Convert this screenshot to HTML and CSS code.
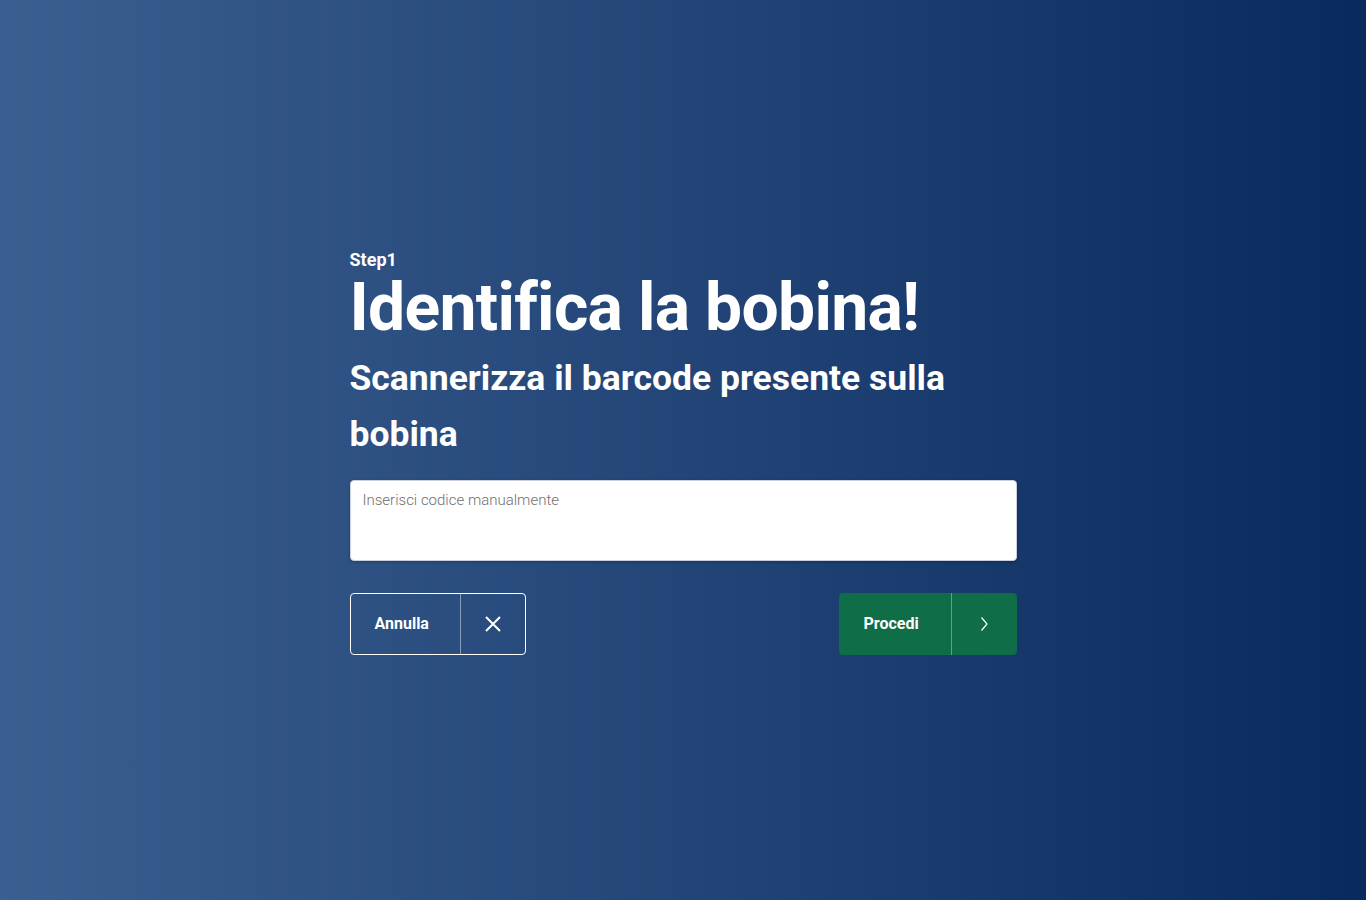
FILE: index.html
```html
<!DOCTYPE html>
<html lang="it">
<head>
<meta charset="utf-8">
<title>Identifica la bobina</title>
<link rel="stylesheet" href="styles.css">
</head>
<body>
<main class="page">
  <section class="panel">
    <div class="step">Step1</div>
    <h1 class="title">Identifica la bobina!</h1>
    <h2 class="subtitle">Scannerizza il barcode presente sulla bobina</h2>
    <textarea class="code-input" placeholder="Inserisci codice manualmente"></textarea>
    <div class="actions">
      <button class="btn btn-cancel" type="button">
        <span class="btn-label">Annulla</span>
        <span class="btn-icon">
          <svg width="18" height="18" viewBox="0 0 18 18" fill="none" stroke="#fff" stroke-width="2"><path d="M2 2 L16 16 M16 2 L2 16"/></svg>
        </span>
      </button>
      <button class="btn btn-go" type="button">
        <span class="btn-label">Procedi</span>
        <span class="btn-icon">
          <svg width="10" height="16" viewBox="0 0 10 16" fill="none" stroke="#fff" stroke-width="1.2"><path d="M2.5 1.5 L8 8 L2.5 14.5"/></svg>
        </span>
      </button>
    </div>
  </section>
</main>
</body>
</html>
```
FILE: styles.css
```css
html, body {
  margin: 0;
  height: 100%;
}
body {
  font-family: Roboto, "Liberation Sans", sans-serif;
  background: linear-gradient(90deg, #3b5f90 0%, #0a2a5d 100%);
  color: #fff;
}
.page {
  min-height: 100vh;
  display: flex;
  align-items: center;
  justify-content: center;
}
.panel {
  width: 667px;
  display: flex;
  flex-direction: column;
  margin-top: 4px;
}
.step {
  font-size: 18px;
  font-weight: 700;
  line-height: 19px;
}
.title {
  margin: 0 0 3px;
  font-size: 66px;
  font-weight: 700;
  line-height: 78px;
  letter-spacing: -0.7px;
}
.subtitle {
  margin: 0;
  font-size: 35.5px;
  font-weight: 700;
  line-height: 56px;
  width: 640px;
}
.code-input {
  margin-top: 18px;
  box-sizing: border-box;
  width: 667px;
  height: 81px;
  border: 1px solid #c9d0d9;
  border-radius: 4px;
  padding: 10px 12px;
  font-family: Roboto, "Liberation Sans", sans-serif;
  font-size: 15px;
  font-weight: 300;
  line-height: 18px;
  resize: none;
  background: #fff;
  color: #333;
  outline: none;
  box-shadow: 0 1px 3px rgba(0, 0, 0, 0.25);
}
.code-input::placeholder {
  color: #6f6f6f;
}
.actions {
  margin-top: 32px;
  display: flex;
  justify-content: space-between;
}
.btn {
  display: flex;
  align-items: stretch;
  height: 62px;
  padding: 0;
  border-radius: 4px;
  font-family: Roboto, "Liberation Sans", sans-serif;
  font-size: 16px;
  font-weight: 700;
  color: #fff;
  cursor: pointer;
}
.btn-label {
  display: flex;
  align-items: center;
  box-sizing: border-box;
  padding-left: 24px;
}
.btn-icon {
  display: flex;
  align-items: center;
  justify-content: center;
  width: 64px;
}
.btn-cancel {
  width: 176px;
  background: transparent;
  border: 1px solid #fff;
}
.btn-cancel .btn-label {
  width: 110px;
  border-right: 1px solid rgba(255, 255, 255, 0.45);
}
.btn-cancel .btn-icon {
  width: 64px;
}
.btn-go {
  width: 178px;
  background: #0f6e47;
  border: none;
}
.btn-go .btn-label {
  width: 113px;
  padding-left: 25px;
  border-right: 1px solid rgba(255, 255, 255, 0.35);
}
.btn-go .btn-icon {
  width: 64px;
}
```
